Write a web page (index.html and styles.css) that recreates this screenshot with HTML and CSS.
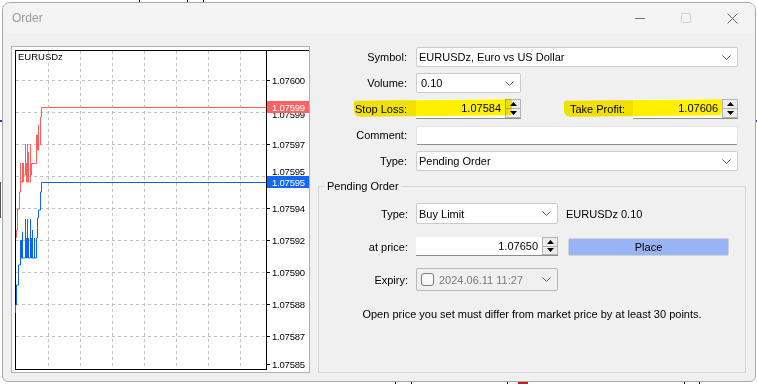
FILE: index.html
```html
<!DOCTYPE html>
<html>
  <head>
    <meta charset="UTF-8" />
    <title>Order</title>
    <link rel="stylesheet" href="styles.css">
  </head>
  <body>
    <!-- bits of the desktop showing around the dialog -->
    <span class="mark m-top1"></span>
    <span class="mark m-top2"></span>
    <span class="mark m-top3"></span>
    <span class="mark m-left-blue"></span>
    <span class="mark m-left-grey"></span>
    <span class="mark m-right-blue"></span>
    <span class="mark m-bot1"></span>
    <span class="mark m-bot2"></span>
    <span class="mark m-bot3"></span>
    <span class="mark m-bot-red"></span>
    <span class="mark m-bot4"></span>
    <span class="mark m-bot5"></span>

    <div class="window">
      <div class="titlebar">
        <span class="title">Order</span>
        <div class="caption-btns">
          <span class="cap-btn">
            <svg width="10" height="10" viewBox="0 0 10 10"><path d="M0 5.5 H10" stroke="#6f6f6f" /></svg>
          </span>
          <span class="cap-btn">
            <svg width="10" height="10" viewBox="0 0 10 10"><rect x="0.5" y="0.5" width="9" height="9" rx="1" fill="none" stroke="#cfcfcf" /></svg>
          </span>
          <span class="cap-btn">
            <svg width="11" height="11" viewBox="0 0 11 11"><path d="M0.5 0.5 L10.5 10.5 M10.5 0.5 L0.5 10.5" stroke="#5f5f5f" /></svg>
          </span>
        </div>
      </div>

      <div class="content">
        <div class="chart-panel">
          <svg class="chart" width="297" height="325" viewBox="12 47 297 325">
            <g class="grid" shape-rendering="crispEdges">
              <path d="M48.5 51 V369 M80.5 51 V369 M112.5 51 V369 M144.5 51 V369 M176.5 51 V369 M208.5 51 V369 M240.5 51 V369" />
              <path d="M16 80.5 H266 M16 112.5 H266 M16 144.5 H266 M16 176.5 H266 M16 208.5 H266 M16 240.5 H266 M16 272.5 H266 M16 304.5 H266 M16 336.5 H266" />
            </g>
            <g class="frame" shape-rendering="crispEdges">
              <path d="M15 50.5 H309 M15.5 50 V370 M266.5 50 V370 M15 369.5 H267" />
              <path d="M266 80.5 H270 M266 112.5 H270 M266 144.5 H270 M266 176.5 H270 M266 208.5 H270 M266 240.5 H270 M266 272.5 H270 M266 304.5 H270 M266 336.5 H270 M266 364.5 H270" />
            </g>
            <text class="sym" x="18" y="59.5">EURUSDz</text>
            <g class="prices">
              <text x="272" y="83.5">1.07600</text>
              <text x="272" y="118">1.07599</text>
              <text x="272" y="147.5">1.07597</text>
              <text x="272" y="175">1.07595</text>
              <text x="272" y="211.5">1.07594</text>
              <text x="272" y="243.5">1.07592</text>
              <text x="272" y="275.5">1.07590</text>
              <text x="272" y="307.5">1.07588</text>
              <text x="272" y="339.5">1.07587</text>
              <text x="272" y="368">1.07585</text>
            </g>
            <path class="ask" d="M16.5 238 V230 H17.5 V209 H19.5 V192 H20.5 V163 V182 H22.5 V163 V182 H23.5 V163 V175 H25.5 V144 V175 H26.5 V163 V182 H27.5 V144 V170 H28.5 V152 V182 H30.5 V144 V175 H31.5 V163.5 H36.5 V135 H37.5 V150 H38.5 V125 V145 H40.5 V117 H41.5 V107.5 H266" />
            <path class="bid" d="M15.5 313 V305 H16.5 V285 H18.5 V265 H20.5 V240 V258 H21.5 V240 V258 H22.5 V232 V258 H25.5 V219 V250 H26.5 V238 V258 H27.5 V219 V250 H28.5 V238 V258 H30.5 V219 V250 H31.5 V238 V258 H32.5 V230 V258 H34.5 V238 V258 H36.5 V238 H37.5 V218 H38.5 V210 H40.5 V192 H41.5 V182.5 H266" />
            <rect class="ask-box" x="267" y="101" width="42" height="12" />
            <text class="box-txt" x="272" y="110.5">1.07599</text>
            <rect class="bid-box" x="267" y="176" width="42" height="12" />
            <text class="box-txt" x="272" y="185.5">1.07595</text>
          </svg>
        </div>

        <div class="order-form">
          <div class="row">
            <label class="lbl">Symbol:</label>
            <div class="combo combo-wide">
              <span>EURUSDz, Euro vs US Dollar</span>
              <svg class="chev" width="9" height="5" viewBox="0 0 9 5"><path d="M0.5 0.5 L4.5 4.5 L8.5 0.5" /></svg>
            </div>
          </div>

          <div class="row">
            <label class="lbl">Volume:</label>
            <div class="combo combo-short combo-vol">
              <span>0.10</span>
              <svg class="chev" width="9" height="5" viewBox="0 0 9 5"><path d="M0.5 0.5 L4.5 4.5 L8.5 0.5" /></svg>
            </div>
          </div>

          <div class="row">
            <label class="lbl">Stop Loss:</label>
            <div class="spin combo-short">
              <span class="spin-val">1.07584</span>
              <span class="spin-btns">
                <span class="sb"><svg width="7" height="4" viewBox="0 0 7 4"><path d="M3.5 0 L7 4 H0 Z" /></svg></span>
                <span class="sb"><svg width="7" height="4" viewBox="0 0 7 4"><path d="M0 0 H7 L3.5 4 Z" /></svg></span>
              </span>
            </div>
            <label class="lbl lbl-tp">Take Profit:</label>
            <div class="spin combo-short">
              <span class="spin-val">1.07606</span>
              <span class="spin-btns">
                <span class="sb"><svg width="7" height="4" viewBox="0 0 7 4"><path d="M3.5 0 L7 4 H0 Z" /></svg></span>
                <span class="sb"><svg width="7" height="4" viewBox="0 0 7 4"><path d="M0 0 H7 L3.5 4 Z" /></svg></span>
              </span>
            </div>
            <span class="marker marker-sl"></span>
            <span class="marker marker-tp"></span>
          </div>

          <div class="row">
            <label class="lbl">Comment:</label>
            <div class="edit combo-wide"></div>
          </div>

          <div class="row">
            <label class="lbl">Type:</label>
            <div class="combo combo-wide">
              <span>Pending Order</span>
              <svg class="chev" width="9" height="5" viewBox="0 0 9 5"><path d="M0.5 0.5 L4.5 4.5 L8.5 0.5" /></svg>
            </div>
          </div>

          <fieldset class="group">
            <legend>Pending Order</legend>

            <div class="grow">
              <label class="lbl">Type:</label>
              <div class="combo combo-mid combo-type">
                <span>Buy Limit</span>
                <svg class="chev" width="9" height="5" viewBox="0 0 9 5"><path d="M0.5 0.5 L4.5 4.5 L8.5 0.5" /></svg>
              </div>
              <span class="hint">EURUSDz 0.10</span>
            </div>

            <div class="grow">
              <label class="lbl">at price:</label>
              <div class="spin combo-mid spin-price">
                <span class="spin-val">1.07650</span>
                <span class="spin-btns">
                  <span class="sb"><svg width="7" height="4" viewBox="0 0 7 4"><path d="M3.5 0 L7 4 H0 Z" /></svg></span>
                  <span class="sb"><svg width="7" height="4" viewBox="0 0 7 4"><path d="M0 0 H7 L3.5 4 Z" /></svg></span>
                </span>
              </div>
              <button class="place">Place</button>
            </div>

            <div class="grow">
              <label class="lbl">Expiry:</label>
              <div class="expiry combo-mid">
                <span class="check"></span>
                <span class="exp-val">2024.06.11 11:27</span>
                <svg class="chev" width="9" height="5" viewBox="0 0 9 5"><path d="M0.5 0.5 L4.5 4.5 L8.5 0.5" /></svg>
              </div>
            </div>

            <p class="note">Open price you set must differ from market price by at least 30 points.</p>
          </fieldset>
        </div>
      </div>
    </div>
  </body>
</html>
```

FILE: styles.css
```css
body {
  margin: 0;
  width: 757px;
  height: 384px;
  overflow: hidden;
  position: relative;
  background: #fff;
  font-family: "Liberation Sans", Arial, sans-serif;
  font-size: 11px;
  color: #000;
}

/* desktop leftovers */
.mark {
  position: absolute;
  width: 1px;
  height: 2px;
  background: #000;
}
.m-top1 { left: 139px; top: 0; }
.m-top2 { left: 187px; top: 0; }
.m-top3 { left: 203px; top: 0; }
.m-left-blue { left: 0; top: 120px; width: 2px; height: 2px; background: #1d3fd8; }
.m-left-grey { left: 0; top: 182px; width: 1px; height: 36px; background: #555; }
.m-right-blue { left: 755px; top: 120px; width: 2px; height: 2px; background: #1d3fd8; }
.m-bot1 { left: 395px; top: 382px; }
.m-bot2 { left: 411px; top: 382px; }
.m-bot3 { left: 507px; top: 382px; }
.m-bot-red { left: 518px; top: 382px; width: 10px; background: #c81e1e; }
.m-bot4 { left: 684px; top: 382px; }
.m-bot5 { left: 699px; top: 382px; }

.window {
  box-sizing: border-box;
  width: 754px;
  height: 380px;
  margin: 2px 0 0 2px;
  border: 1px solid #a9a9a9;
  border-radius: 8px 8px 6px 6px;
  background: #f0f0f0;
  overflow: hidden;
  position: relative;
}

.titlebar {
  height: 30px;
  background: #f3f3f3;
  display: flex;
  align-items: center;
}

.title {
  font-size: 12px;
  color: #9a9a9a;
  margin-left: 9px;
}

.caption-btns {
  margin-left: auto;
  display: flex;
}

.cap-btn {
  width: 46px;
  height: 30px;
  display: flex;
  align-items: center;
  justify-content: center;
}

.content {
  display: flex;
  gap: 8px;
  padding: 13px 9px 0 8px;
}

.chart-panel {
  box-sizing: border-box;
  width: 299px;
  height: 327px;
  border: 1px solid #b0b0b0;
  background: #fff;
}

.chart {
  display: block;
  font-family: "Liberation Sans", Arial, sans-serif;
  font-size: 9.5px;
}

.prices text {
  letter-spacing: -0.2px;
}

.grid path {
  fill: none;
  stroke: #c2c2c2;
  stroke-dasharray: 3 3;
}

.frame path {
  fill: none;
  stroke: #000;
}

.ask {
  fill: none;
  stroke: #ff5e5e;
}

.bid {
  fill: none;
  stroke: #0a64f5;
}

.ask-box { fill: #ff6262; }
.bid-box { fill: #1467f2; }
.box-txt { fill: #fff; letter-spacing: -0.2px; }

.order-form {
  width: 428px;
  margin-top: 1px;
  position: relative;
}

.row {
  position: relative;
  display: flex;
  align-items: center;
  height: 20px;
  margin-bottom: 6px;
}

.lbl {
  width: 89px;
  margin-right: 9px;
  text-align: right;
  flex-shrink: 0;
}

.lbl-tp {
  width: 104px;
  margin-right: 8px;
}

.combo {
  box-sizing: border-box;
  height: 20px;
  display: flex;
  align-items: center;
  background: #fff;
  border: 1px solid #cbcbcb;
  border-radius: 2px;
  padding: 0 6px 0 2px;
}

.combo span {
  flex: 1;
}

.chev path {
  fill: none;
  stroke: #5a5a5a;
}

.combo-wide { width: 322px; }
.combo-short { width: 105px; }
.combo-mid { width: 142px; }
.combo-vol { padding-left: 4px; }

.edit {
  box-sizing: border-box;
  height: 19px;
  background: #fff;
  border: 1px solid #e2e2e2;
  border-bottom-color: #8c8c8c;
  border-radius: 2px;
}

.spin {
  box-sizing: border-box;
  height: 20px;
  display: flex;
  background: #fff;
  border-bottom: 1px solid #8c8c8c;
}

.spin-val {
  flex: 1;
  text-align: right;
  padding-right: 4px;
  line-height: 19px;
}

.spin-btns {
  width: 16px;
  display: flex;
  flex-direction: column;
  border: 1px solid #b4b4b4;
  box-sizing: border-box;
  background: #ececec;
}

.sb {
  flex: 1;
  display: flex;
  align-items: center;
  justify-content: center;
}

.sb + .sb {
  border-top: 1px solid #b4b4b4;
}

.sb path {
  fill: #000;
}

.marker {
  position: absolute;
  top: 1px;
  height: 16px;
  width: 158px;
  background: #fff000;
  mix-blend-mode: multiply;
  border-radius: 2px 1px 4px 6px;
  transform: rotate(-0.5deg);
}

.marker-sl { left: 36px; }
.marker-tp { left: 246px; }

.group {
  box-sizing: border-box;
  height: 194px;
  margin: 8px 0 0;
  padding: 9px 0 0;
  border: 1px solid #d6d6d6;
  min-width: 0;
}

.group legend {
  margin-left: 6px;
  padding: 0 2px;
  line-height: 14px;
}

.group .lbl {
  margin-right: 8px;
}

.grow {
  display: flex;
  align-items: center;
  height: 23px;
  margin-bottom: 10px;
}

.combo-type {
  height: 21px;
}

.hint {
  margin-left: 8px;
}

.spin-price {
  height: 19px;
}

.place {
  margin-left: 10px;
  width: 161px;
  height: 18px;
  padding: 0;
  font: inherit;
  color: #000;
  background: #99b4f4;
  border: 1px solid #d2d2d2;
  border-radius: 2px;
}

.expiry {
  box-sizing: border-box;
  height: 23px;
  display: flex;
  align-items: center;
  border: 1px solid #b8b8b8;
  border-radius: 2px;
  padding: 0 6px 0 4px;
}

.check {
  box-sizing: border-box;
  width: 13px;
  height: 13px;
  border: 1px solid #7c7c7c;
  border-radius: 3px;
  background: #f7f7f7;
  margin-right: 5px;
}

.exp-val {
  flex: 1;
  color: #7a7a7a;
  white-space: nowrap;
  overflow: hidden;
  margin-right: 10px;
}

.note {
  margin: 16px 0 0;
  line-height: 14px;
  text-align: center;
}
```
